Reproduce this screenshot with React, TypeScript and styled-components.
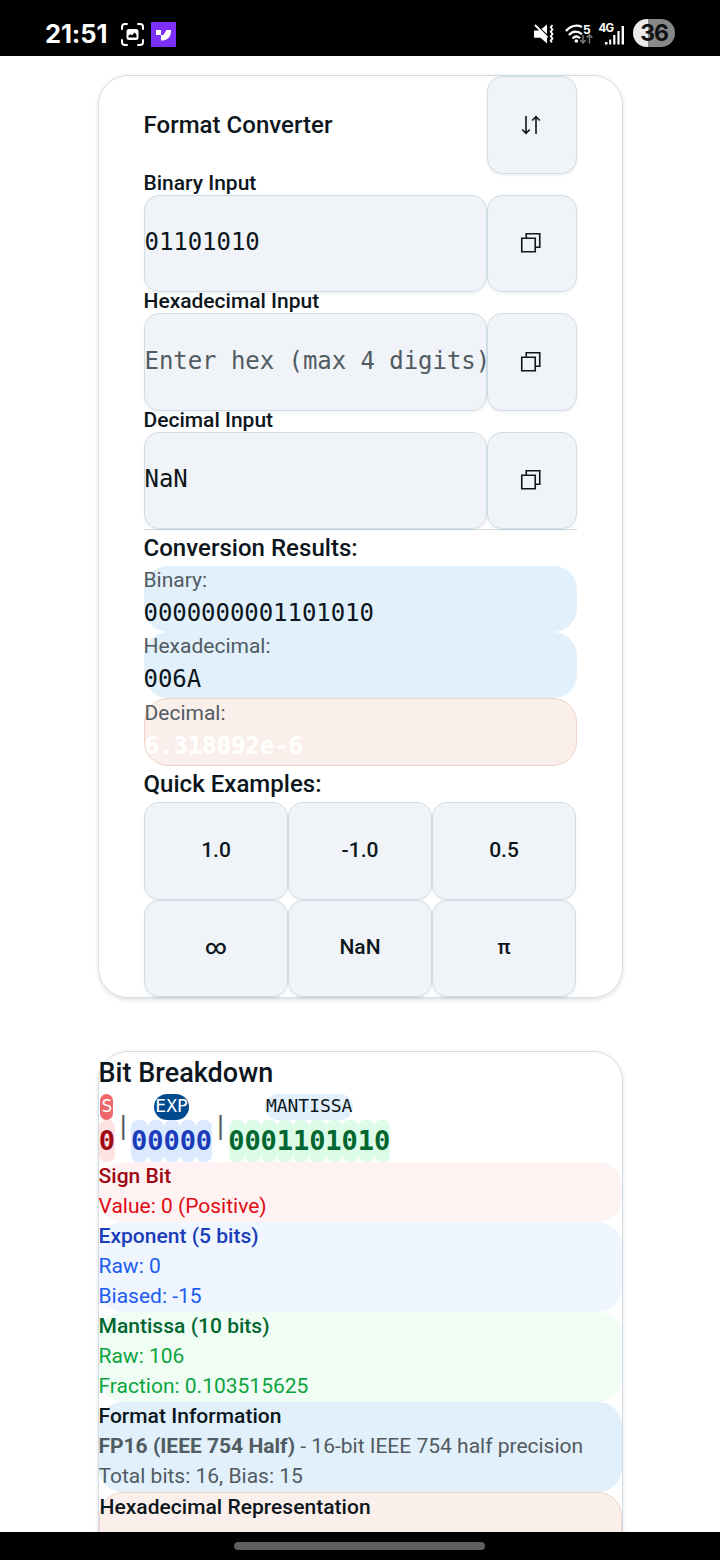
import React from 'react';
import styled, { createGlobalStyle } from 'styled-components';

const ink = '#0c161c';
const muted = '#515b62';
const line = '#d1dde6';
const field = '#f0f4f8';
const mono = '"DejaVu Sans Mono", "Liberation Mono", monospace';

const Global = createGlobalStyle`
  * { box-sizing: border-box; }
  body { margin: 0; background: #fff; font-family: Roboto, "Liberation Sans", sans-serif; color: ${ink}; }
  button, input { font: inherit; color: inherit; margin: 0; }
`;

const Screen = styled.div`
  width: 720px;
  height: 1560px;
  display: flex;
  flex-direction: column;
  overflow: hidden;
`;

const StatusBar = styled.header`
  flex: none;
  height: 56px;
  padding: 12px 45px 0;
  background: #000;
  color: #fff;
  display: flex;
  justify-content: space-between;
`;

const StatusGroup = styled.div`
  display: flex;
  align-items: center;
  height: 44px;
`;

const Clock = styled.span`
  font: 700 25.5px/44px Inter, sans-serif;
  width: 63px;
  letter-spacing: -0.1px;
  margin-right: 12px;
  white-space: nowrap;
`;

const StatusIcon = styled.svg<{ $gap?: number }>`
  display: block;
  flex: none;
  overflow: visible;
  margin-right: ${(p) => p.$gap ?? 0}px;
`;

const Battery = styled.span`
  width: 42px;
  height: 28px;
  margin-top: -2px;
  border-radius: 14px;
  background: linear-gradient(90deg, #ebebeb 15px, #888 15px);
  color: #111;
  font: 700 23px/28px Inter, sans-serif;
  letter-spacing: -1.2px;
  text-align: center;
`;

const Page = styled.main`
  flex: 1;
  min-height: 0;
  overflow: hidden;
  padding: 19px 97px 0 98px;
  display: flex;
  flex-direction: column;
  gap: 53px;
`;

const Card = styled.section<{ $inset?: number }>`
  flex: none;
  padding: 0 ${(p) => p.$inset ?? 0}px;
  border: 1px solid ${line};
  border-radius: 30px;
  box-shadow: 0 1.5px 4px rgba(0, 0, 0, 0.12);
`;

const CardHeader = styled.div`
  height: 97.7px;
  display: flex;
  align-items: center;
  justify-content: space-between;
`;

const Heading = styled.h2`
  margin: 0;
  font-size: 24px;
  font-weight: 500;
  line-height: 36px;
  letter-spacing: 0.03px;
  text-indent: -0.5px;
`;

const Title = styled(Heading)`
  font-size: 27px;
  line-height: 42px;
`;

const Button = styled.button`
  height: 97.5px;
  padding: 0 0 2px;
  display: flex;
  align-items: center;
  justify-content: center;
  flex: none;
  border: 1px solid ${line};
  border-radius: 15px;
  background: ${field};
  box-shadow: 0 1.5px 3px rgba(0, 0, 0, 0.05);
  font-size: 21px;
  font-weight: 500;
`;

const IconButton = styled(Button)`
  width: 90px;
  padding: 0 2px 0 0;
`;

const Label = styled.label`
  display: block;
  font-size: 21px;
  font-weight: 500;
  line-height: 19px;
  padding-bottom: 2px;
  text-indent: -0.5px;
`;

const FieldRow = styled.div`
  display: flex;
`;

const Input = styled.input`
  flex: 1;
  min-width: 0;
  height: 97.5px;
  padding: 0 0 2px;
  border: 1px solid ${line};
  border-radius: 15px;
  background: ${field};
  box-shadow: 0 1.5px 3px rgba(0, 0, 0, 0.05);
  font-family: ${mono};
  font-size: 24px;
  letter-spacing: -0.05px;
  text-indent: -0.5px;
  &::placeholder { color: ${muted}; opacity: 1; }
`;

const Results = styled.div`
  border-top: 1px solid ${line};
`;

const Result = styled.div<{ $accent?: boolean }>`
  border-radius: 24px;
  background: ${(p) => (p.$accent ? '#fbefeb' : '#e1f0fa')};
  border: ${(p) => (p.$accent ? '1px solid #efd3c8' : '0')};
`;

const ResultLabel = styled.div`
  font-size: 21px;
  line-height: 28px;
  padding-bottom: 2px;
  text-indent: -0.5px;
  color: ${muted};
`;

const ResultValue = styled.div<{ $accent?: boolean }>`
  font-family: ${mono};
  font-size: 24px;
  line-height: 34px;
  padding-bottom: 2px;
  letter-spacing: -0.05px;
  text-indent: -0.5px;
  font-weight: ${(p) => (p.$accent ? 700 : 400)};
  color: ${(p) => (p.$accent ? '#fff' : ink)};
`;

const Examples = styled.div`
  display: grid;
  grid-template-columns: repeat(3, 144px);
`;

const BitRow = styled.div`
  display: flex;
  align-items: center;
  height: 68px;
`;

const BitGroup = styled.div`
  display: flex;
  flex-direction: column;
  align-items: center;
`;

const BitTag = styled.span<{ $bg: string; $fg: string }>`
  height: 26px;
  padding: 0 1px;
  margin-right: 0.6px;
  border-radius: 13px;
  background: ${(p) => p.$bg};
  color: ${(p) => p.$fg};
  font: 400 18px/23px ${mono};
  letter-spacing: -0.04px;
`;

const Bits = styled.div`
  display: flex;
`;

const Bit = styled.span<{ $bg: string; $fg: string }>`
  width: 16.2px;
  height: 42px;
  border-radius: 7px;
  background: ${(p) => p.$bg};
  color: ${(p) => p.$fg};
  font: 700 27px/42px ${mono};
  text-indent: -0.3px;
`;

const Separator = styled.span`
  width: 16.2px;
  padding-bottom: 4px;
  text-align: center;
  font: 400 25px/30px ${mono};
  color: ${muted};
`;

const Info = styled.div<{ $bg: string; $edge?: string }>`
  border-radius: 24px;
  background: ${(p) => p.$bg};
  border: ${(p) => (p.$edge ? `1px solid ${p.$edge}` : '0')};
  min-height: ${(p) => (p.$edge ? 100 : 0)}px;
`;

const InfoLine = styled.div<{ $fg: string; $strong?: boolean }>`
  font-size: 21px;
  line-height: 28px;
  padding-bottom: 2px;
  text-indent: -0.5px;
  letter-spacing: ${(p) => (p.$strong ? 0.03 : 0)}px;
  font-weight: ${(p) => (p.$strong ? 500 : 400)};
  color: ${(p) => p.$fg};
  white-space: nowrap;
  b { font-weight: 700; }
`;

const NavBar = styled.footer`
  flex: none;
  height: 28px;
  background: #000;
  display: flex;
  justify-content: center;
  padding: 10px 1px 0 0;
`;

const NavHandle = styled.div`
  width: 251px;
  height: 8px;
  border-radius: 4px;
  background: #5e5e5e;
`;

const SwapIcon = () => (
  <svg width="22" height="20" viewBox="0 0 22 20" fill="none" stroke={ink} strokeWidth="1.6">
    <path d="M6 1v17M2.200 14.500L6 18.300l3.800-3.800M16 19V2M12.200 5.500L16 1.700l3.800 3.800" />
  </svg>
);

const CopyIcon = () => (
  <svg width="22" height="22" viewBox="0 0 22 22" fill="none" stroke={ink} strokeWidth="1.6">
    <path d="M1.750 6.250h13.500v13.500H1.750zM6.250 6.250v-4.500h13.500v13.500h-4.500" />
  </svg>
);

const fields = [
  { label: 'Binary Input', value: '01101010', hint: '' },
  { label: 'Hexadecimal Input', value: '', hint: 'Enter hex (max 4 digits)' },
  { label: 'Decimal Input', value: 'NaN', hint: '' },
];

const results = [
  { label: 'Binary:', value: '0000000001101010' },
  { label: 'Hexadecimal:', value: '006A' },
  { label: 'Decimal:', value: '6.318092e-6', accent: true },
];

const groups = [
  { tag: 'S', tagBg: '#ef666c', tagFg: '#fff', bits: '0', bg: '#ffe2e2', fg: '#9f0712' },
  { tag: 'EXP', tagBg: '#004b8d', tagFg: '#fff', bits: '00000', bg: '#dbeafe', fg: '#193cb8' },
  { tag: 'MANTISSA', tagBg: '#e1f0fa', tagFg: ink, bits: '0001101010', bg: '#dcfce7', fg: '#016630' },
];

export default function App() {
  return (
    <Screen>
      <Global />
      <StatusBar>
        <StatusGroup>
          <Clock>21:51</Clock>
          <StatusIcon $gap={6} width="25" height="25" viewBox="0 0 25 25" fill="none" stroke="#fff" strokeWidth="2" strokeLinecap="round">
            <path d="M2 7V5a3 3 0 0 1 3-3h2M18 2h2a3 3 0 0 1 3 3v2M23 18v2a3 3 0 0 1-3 3h-2M7 23H5a3 3 0 0 1-3-3v-2" />
            <rect x="6.500" y="7" width="12" height="11" rx="2.500" fill="#fff" stroke="none" />
            <path d="M8.500 15.500v-2l2-1.300 1.600 1 2.400-2.700 2 2.200v2.800z" fill="#000" stroke="none" />
          </StatusIcon>
          <StatusIcon width="25" height="25" viewBox="0 0 25 25">
            <path fill="#7b2ff7" d="M0 0h25v25H0z" />
            <path fill="#fff" d="M5 8h5v5H5zM10 13h2.500L15.500 8H20v1.500c0 5-3.500 8.500-8 9h-2z" />
          </StatusIcon>
        </StatusGroup>
        <StatusGroup>
          <StatusIcon $gap={11} width="21" height="22" viewBox="0 0 21 22" fill="none" stroke="#fff" strokeWidth="1.800">
            <path fill="#fff" stroke="none" d="M1 7.500h6l7 7v6l-6.500-5.800H1zM8.500 6L14 1.500V11z" />
            <path d="M2 2l12.500 12.500" strokeWidth="1.800" />
            <path d="M19.500 2l-1.800 2.200 1.800 2.200-1.800 2.300 1.800 2.300-1.800 2.300 1.800 2.200-1.800 2.200 1.300 1.800" />
          </StatusIcon>
          <StatusIcon $gap={6} width="28" height="22" viewBox="0 0 28 22" fill="none" stroke="#fff" strokeWidth="2.200">
            <path d="M1 8C5 2.500 12 1.400 17 4M4 12c3.800-4.500 9-4.500 13-.7M7.500 15.500c2.500-2.600 5-2.600 7.500-.2" />
            <circle cx="11.300" cy="18" r="1.800" fill="#fff" stroke="none" />
            <text x="18" y="11" fill="#fff" stroke="none" fontFamily="Inter" fontSize="12" fontWeight="700">5</text>
            <path stroke="#777" strokeWidth="1.500" d="M18 12v8M15.200 17l2.800 3 2.800-3M24.500 20.500V12M21.700 14.800l2.800-3 2.800 3" />
          </StatusIcon>
          <StatusIcon $gap={8} width="26" height="24" viewBox="0 0 26 24" fill="#fff">
            <text x="-0.500" y="10" fontFamily="Inter" fontSize="11.500" fontWeight="700" letterSpacing="-0.700">4G</text>
            <path d="M6 20h2.500v2.500H6zM10.200 17.500h2v5h-2zM14.200 13h2.200v9.500h-2.200zM18.400 9h2.200v13.500h-2.200zM22.600 4h2.400v18.500h-2.400z" />
          </StatusIcon>
          <Battery>36</Battery>
        </StatusGroup>
      </StatusBar>
      <Page>
        <Card $inset={45}>
          <CardHeader>
            <Heading>Format Converter</Heading>
            <IconButton aria-label="Swap"><SwapIcon /></IconButton>
          </CardHeader>
          {fields.map((f) => (
            <div key={f.label}>
              <Label>{f.label}</Label>
              <FieldRow>
                <Input aria-label={f.label} defaultValue={f.value} placeholder={f.hint} />
                <IconButton aria-label="Copy"><CopyIcon /></IconButton>
              </FieldRow>
            </div>
          ))}
          <Results>
            <Heading>Conversion Results:</Heading>
            {results.map((r) => (
              <Result key={r.label} $accent={r.accent}>
                <ResultLabel>{r.label}</ResultLabel>
                <ResultValue $accent={r.accent}>{r.value}</ResultValue>
              </Result>
            ))}
          </Results>
          <Heading>Quick Examples:</Heading>
          <Examples>
            {['1.0', '-1.0', '0.5', '∞', 'NaN', 'π'].map((x) => (
              <Button key={x}>{x}</Button>
            ))}
          </Examples>
        </Card>
        <Card>
          <Title>Bit Breakdown</Title>
          <BitRow>
            {groups.map((g, i) => (
              <React.Fragment key={g.tag}>
                {i > 0 && <Separator>|</Separator>}
                <BitGroup>
                  <BitTag $bg={g.tagBg} $fg={g.tagFg}>{g.tag}</BitTag>
                  <Bits>
                    {g.bits.split('').map((b, j) => (
                      <Bit key={j} $bg={g.bg} $fg={g.fg}>{b}</Bit>
                    ))}
                  </Bits>
                </BitGroup>
              </React.Fragment>
            ))}
          </BitRow>
          <Info $bg="#fef2f2">
            <InfoLine $strong $fg="#9f0712">Sign Bit</InfoLine>
            <InfoLine $fg="#e00a14">Value: 0 (Positive)</InfoLine>
          </Info>
          <Info $bg="#eff6ff">
            <InfoLine $strong $fg="#193cb8">Exponent (5 bits)</InfoLine>
            <InfoLine $fg="#1c5cf0">Raw: 0</InfoLine>
            <InfoLine $fg="#1c5cf0">Biased: -15</InfoLine>
          </Info>
          <Info $bg="#f0fdf4">
            <InfoLine $strong $fg="#016630">Mantissa (10 bits)</InfoLine>
            <InfoLine $fg="#0ca440">Raw: 106</InfoLine>
            <InfoLine $fg="#0ca440">Fraction: 0.103515625</InfoLine>
          </Info>
          <Info $bg="#e1f0fa">
            <InfoLine $strong $fg={ink}>Format Information</InfoLine>
            <InfoLine $fg={muted}><b>FP16 (IEEE 754 Half)</b> - 16-bit IEEE 754 half precision</InfoLine>
            <InfoLine $fg={muted}>Total bits: 16, Bias: 15</InfoLine>
          </Info>
          <Info $bg="#fbefeb" $edge="#efd3c8">
            <InfoLine $strong $fg={ink}>Hexadecimal Representation</InfoLine>
          </Info>
        </Card>
      </Page>
      <NavBar><NavHandle /></NavBar>
    </Screen>
  );
}
